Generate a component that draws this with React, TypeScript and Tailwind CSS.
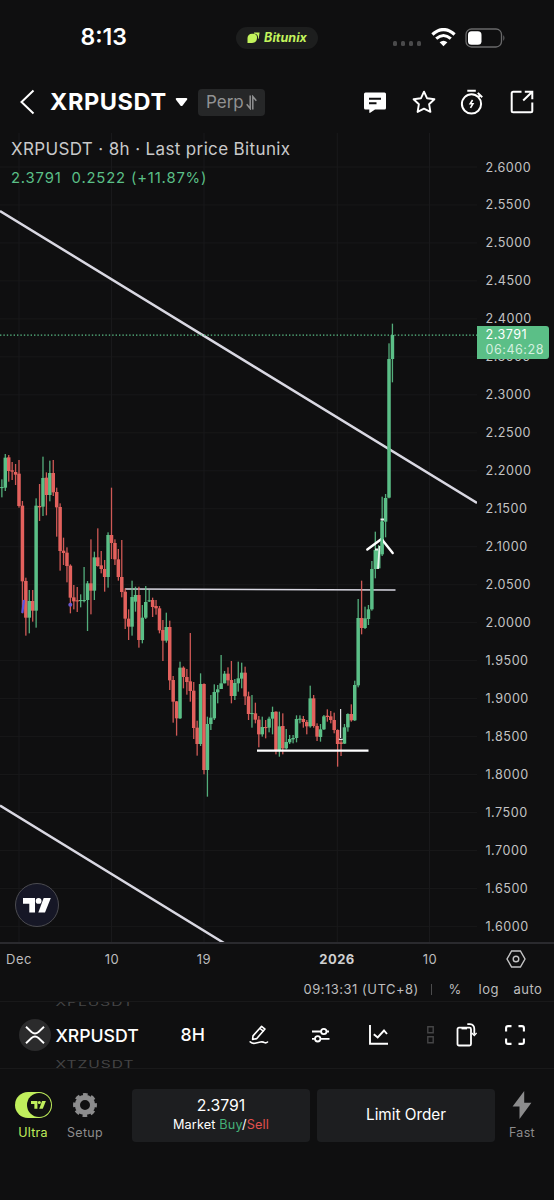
import React from "react";

type Candle = [high: number, low: number, top: number, bottom: number, up: 0 | 1];

// Each segment holds offsets in thirds of a pixel from its base line.
const segments: { base: number; rows: Candle[] }[] = [
  {
    base: 440,
    rows: [
      [118, 172, 141, 143, 1], [42, 153, 53, 143, 1], [45, 125, 52, 93, 0], [66, 120, 91, 95, 0],
      [72, 135, 96, 104, 0], [60, 203, 101, 198, 0], [183, 520, 197, 424, 0], [413, 587, 423, 533, 0],
      [450, 580, 483, 533, 1], [450, 545, 483, 512, 0], [175, 563, 197, 512, 1], [132, 243, 198, 202, 0],
      [50, 228, 114, 200, 1], [97, 226, 113, 165, 0], [62, 184, 99, 165, 1], [60, 168, 99, 157, 0],
      [143, 290, 156, 202, 0], [190, 392, 201, 333, 0], [293, 375, 332, 339, 0], [322, 427, 338, 378, 0],
      [373, 520, 377, 473, 0], [435, 508, 472, 484, 0], [441, 516, 481, 484, 0], [463, 502, 480, 483, 1],
      [381, 487, 480, 482, 1], [423, 573, 430, 480, 1], [298, 523, 430, 452, 0], [335, 480, 352, 452, 1],
      [265, 380, 352, 378, 0], [333, 400, 376, 387, 0], [360, 455, 387, 411, 0], [277, 443, 285, 411, 1],
      [143, 357, 285, 309, 0], [298, 375, 309, 358, 0], [327, 422, 358, 411, 0], [300, 472, 411, 456, 0],
    ],
  },
  {
    base: 470,
    rows: [
      [355, 477, 365, 446, 0], [418, 510, 446, 470, 0], [332, 497, 381, 470, 1], [350, 425, 375, 395, 1],
      [350, 533, 375, 510, 0], [405, 520, 443, 510, 1], [348, 447, 396, 443, 1], [360, 396, 391, 394, 1],
      [383, 441, 390, 411, 0], [390, 434, 408, 415, 0], [408, 490, 415, 481, 0], [450, 573, 480, 512, 0],
      [428, 518, 471, 512, 1], [452, 660, 471, 631, 0], [618, 758, 630, 695, 0], [693, 797, 694, 745, 0],
      [575, 747, 593, 745, 1], [589, 655, 593, 621, 0], [597, 674, 621, 636, 0], [489, 695, 634, 663, 0],
      [636, 807, 662, 774, 0], [752, 857, 773, 822, 0], [610, 828, 642, 822, 1], [640, 913, 642, 900, 0],
      [740, 980, 762, 900, 1], [675, 780, 743, 762, 1],
    ],
  },
  {
    base: 640,
    rows: [
      [133, 240, 156, 235, 1], [135, 190, 148, 157, 1], [45, 147, 130, 147, 1], [93, 130, 101, 130, 1],
      [82, 137, 101, 121, 0], [63, 190, 120, 168, 0], [117, 180, 129, 168, 1], [65, 155, 115, 130, 1],
      [68, 145, 98, 116, 1], [80, 195, 98, 169, 0], [155, 240, 169, 222, 0], [165, 263, 219, 222, 1],
      [188, 250, 220, 239, 0], [228, 322, 239, 283, 0], [230, 290, 261, 283, 1], [240, 295, 261, 264, 0],
      [230, 277, 236, 263, 1], [200, 283, 216, 236, 1], [214, 343, 215, 333, 0], [215, 350, 259, 333, 1],
      [220, 343, 258, 325, 0], [267, 328, 306, 325, 1], [285, 312, 297, 307, 1], [285, 310, 294, 298, 1],
      [226, 307, 237, 294, 1], [226, 250, 236, 239, 1], [228, 263, 237, 246, 0], [240, 283, 246, 259, 0],
      [137, 263, 175, 259, 1], [165, 263, 175, 258, 0], [250, 303, 258, 290, 0], [252, 305, 268, 291, 1],
      [225, 270, 229, 268, 1], [208, 245, 227, 231, 0], [213, 250, 229, 240, 0], [218, 280, 240, 270, 0],
      [268, 380, 270, 312, 0], [300, 348, 307, 312, 0], [252, 312, 262, 311, 1], [220, 275, 222, 262, 1],
      [193, 245, 222, 241, 0], [122, 243, 135, 241, 1],
    ],
  },
  {
    base: 490,
    rows: [
      [327, 592, 384, 586, 1], [272, 433, 384, 414, 0], [350, 417, 385, 414, 1], [345, 405, 358, 387, 1],
      [213, 362, 237, 358, 1], [125, 265, 180, 237, 1], [165, 235, 180, 235, 1], [20, 198, 95, 193, 1],
      [12, 142, 24, 95, 1],
    ],
  },
  { base: 310, rows: [[100, 565, 147, 563, 1], [41, 217, 75, 147, 1]] },
];

const candles = segments.flatMap(({ base, rows }) =>
  rows.map(([h, l, t, b, up]) => ({ h: base + h / 3, l: base + l / 3, t: base + t / 3, b: base + b / 3, up })),
);

const prices = Array.from({ length: 21 }, (_, i) => (2.6 - i * 0.05).toFixed(4));
const gridX = [19, 111.5, 204, 337.3, 429.5];

function Chart() {
  return (
    <svg width="477" height="809" viewBox="0 133 477 809" className="block">
      {prices.map((p, i) => (
        <rect key={p} x="0" y={166.5 + i * 37.97} width="477" height="1" fill="#181819" />
      ))}
      {gridX.map((x) => (
        <rect key={x} x={x - 0.5} y="133" width="1" height="810" fill="#19191b" />
      ))}
      <g stroke="#d9d8e2" fill="none">
        <path d="M0 211L477 503M0 805.5L224 943" strokeWidth="2.5" />
        <path d="M125 589L395.5 590" strokeWidth="1.5" />
      </g>
      {candles.map((c, i) => {
        const x = 1.87 + i * 3.426;
        const color = c.up ? "#5bbf87" : "#e3615d";
        return (
          <g key={i} fill={color}>
            <rect x={x - 0.65} y={c.h} width="1.3" height={c.l - c.h} opacity="0.9" />
            <rect x={x - 1.75} y={c.t} width="3.5" height={Math.max(c.b - c.t, 1.1)} />
          </g>
        );
      })}
      <path d="M22.3 613L24 600" stroke="#5b55e0" strokeWidth="2.2" />
      <circle cx="70.3" cy="604.7" r="2" fill="#6a58cf" />
      <path d="M257 750.6H368.5" stroke="#fff" strokeWidth="2.4" />
      <path d="M340.6 709V738M338.8 739.3H342.8" stroke="#dedee2" strokeWidth="1.2" />
      <path d="M367.3 549.5L381.5 539L392.7 553" stroke="#fff" strokeWidth="2.4" fill="none" strokeLinecap="round" />
      <path d="M378 569L379.6 546M375 549.5H378M380.5 519.5H384" stroke="#e6f3ec" strokeWidth="1.8" fill="none" />
      <path d="M381.8 521V550" stroke="#5bbf87" strokeWidth="2.4" />
      <path d="M0 335.2H477" stroke="#5bbf87" strokeWidth="1.2" strokeDasharray="1.4 2" />
    </svg>
  );
}

function TvMark({ className }: { className: string }) {
  return (
    <svg viewBox="0 0 28 15" className={className} fill="currentColor">
      <path d="M0 0H12V14.5H6.3V5.7H0Z" />
      <circle cx="15.6" cy="2.9" r="2.9" />
      <path d="M20.7 0H27.8L22 14.5H15.3Z" />
    </svg>
  );
}

function StatusBar() {
  return (
    <div className="flex h-[75px] items-center text-white">
      <div className="w-[156px] pl-[80.5px] text-[23px] font-semibold leading-none tracking-[0px]">8:13</div>
      <div className="ml-20 flex h-[22px] w-[82px] items-center justify-center gap-1 rounded-full bg-[#1d1e1e] text-[#c3f45c]">
        <svg width="13" height="12" viewBox="0 0 13 12" fill="currentColor">
          <path d="M.5 11V6Q.8 2 5 1.8H6.3Q10.2 2 10 6 9.7 11 5 11Z" />
          <path d="M7 .6H12.6L11.8 6.3 11 7Q11.6 1.8 7 1.4Z" />
        </svg>
        <span className="text-[12.5px] font-bold italic leading-[14px] tracking-[0.05px]">Bitunix</span>
      </div>
      <div className="ml-[75px] flex items-center">
        <div className="mt-3 flex gap-[3.6px]">
          {[0, 1, 2, 3].map((i) => (
            <span key={i} className="size-[4.4px] rounded-[1.5px] bg-[#4a4a4b]" />
          ))}
        </div>
        <svg width="25" height="19" viewBox="0 0 25 19" className="ml-[9.5px]" fill="none" stroke="#fff">
          <path d="M1.4 6.5Q12.5-3.4 23.6 6.5" strokeWidth="3.2" />
          <path d="M5.2 10.6Q12.5 4.4 19.8 10.6" strokeWidth="3.1" />
          <path d="M12.5 18.3L8.6 14.3Q12.5 11 16.4 14.3Z" fill="#fff" stroke="none" />
        </svg>
        <svg width="41" height="20" viewBox="0 0 41 20" className="ml-[9px]">
          <rect x="1" y="1" width="35.5" height="18" rx="5.5" fill="none" stroke="#69696a" strokeWidth="1.3" />
          <rect x="3" y="3.2" width="13.5" height="13.6" rx="3.6" fill="#fff" />
          <path d="M38.3 7Q40.6 10 38.3 13Z" fill="#69696a" />
        </svg>
      </div>
    </div>
  );
}

function Header() {
  return (
    <div className="flex h-[54px] items-center pl-5 text-white">
      <svg width="15" height="26" viewBox="0 0 15 26" fill="none" stroke="currentColor" strokeWidth="2">
        <path d="M13.5 1.5L1.5 13 13.5 24.5" />
      </svg>
      <h1 className="ml-[15px] w-[118px] whitespace-nowrap text-[23.5px] font-bold leading-none tracking-[0.6px]">XRPUSDT</h1>
      <svg width="13" height="9" viewBox="0 0 13 9" className="ml-[7px]" fill="currentColor">
        <path d="M1.5 0H11.5Q13 .4 12 1.8L7.6 7.4Q6.5 8.6 5.4 7.4L1 1.8Q0 .4 1.5 0Z" />
      </svg>
      <div className="ml-[10px] flex h-[27px] w-[67px] items-center gap-[2px] rounded-sm bg-[#262728] pl-[8px] text-[#919293]">
        <span className="text-[17px] leading-none tracking-[0px]">Perp</span>
        <svg width="11" height="15" viewBox="0 0 11 15" fill="none" stroke="currentColor" strokeWidth="1.5">
          <path d="M4.2 .5V13.5L.7 9.3M6.8 14.5V1.5L10.3 5.7" />
        </svg>
      </div>
      <svg width="24" height="24" viewBox="0 0 24 24" className="ml-[98px]">
        <path d="M2.5 2.5H21.5Q23 2.5 23 4V18Q23 19.5 21.5 19.5H12L7.2 22.8Q6.3 23.2 6.3 22V19.5H2.5Q1 19.5 1 18V4Q1 2.5 2.5 2.5Z" fill="#fff" />
        <path d="M6 8.8H18M6 13.2H13.5" stroke="#0f0f10" strokeWidth="2" />
      </svg>
      <svg width="24" height="24" viewBox="0 0 24 24" className="ml-[25px]" fill="none" stroke="currentColor" strokeWidth="1.9" strokeLinejoin="round">
        <path d="M12 1.7L15.1 8.3 22.4 9.2 17.1 14.2 18.4 21.9 12 18.6 5.6 21.9 6.9 14.2 1.6 9.2 8.9 8.3Z" />
      </svg>
      <svg width="26" height="26" viewBox="0 0 26 26" className="ml-[23px]" fill="none" stroke="currentColor" strokeWidth="2">
        <circle cx="12.5" cy="14.9" r="9.6" />
        <path d="M8.3 1.7H16.8M18.8 3.9L23.2 8.2M19.3 8L21.5 5.8" />
        <path d="M13.6 11L11.2 14.8H13.9L11.5 18.8" strokeWidth="1.6" />
      </svg>
      <svg width="24" height="24" viewBox="0 0 24 24" className="ml-[25px]" fill="none" stroke="currentColor" strokeWidth="2">
        <path d="M11.5 1.7H3.2Q1.7 1.7 1.7 3.2V20.8Q1.7 22.3 3.2 22.3H20.8Q22.3 22.3 22.3 20.8V12.5M14.8 1.7H22.3V9.2M22 2L13.2 10.5" />
      </svg>
    </div>
  );
}

function PriceAxis() {
  return (
    <div className="relative h-[809px] w-[77px] overflow-hidden pt-[16px] text-[12.6px] tracking-[0.5px] text-[#c3c3c4]">
      {prices.map((p) => (
        <div key={p} className="flex h-[37.97px] items-start pl-[8.5px]">
          <span className="-mt-[0.5px] leading-[38px]">{p}</span>
        </div>
      ))}
      <div className="absolute left-0 top-[193px] flex h-[33px] w-[72px] flex-col justify-center rounded-r-[3px] bg-[#5bbf87] pl-[8.5px] leading-[14.7px] text-white">
        <span>2.3791</span>
        <span className="text-[#d3efdf]">06:46:28</span>
      </div>
    </div>
  );
}

function TimeAxis() {
  return (
    <div className="border-t-2 border-[#2a2a2e] text-[13px] tracking-[0.5px] text-[#bdbdbe]">
      <div className="flex h-[30px] items-center leading-none">
        <span className="w-[38px] text-center">Dec</span>
        <span className="ml-[54px] w-[40px] text-center">10</span>
        <span className="ml-[52px] w-[40px] text-center">19</span>
        <span className="ml-[83px] w-[60px] text-center font-bold text-[#d0d0d1]">2026</span>
        <span className="ml-[43px] w-[40px] text-center">10</span>
        <svg width="20" height="18" viewBox="0 0 20 18" className="ml-[56px]" fill="none" stroke="#c4c4c5" strokeWidth="1.4">
          <path d="M5.6 1H14.4L19 9 14.4 17H5.6L1 9Z" />
          <circle cx="10" cy="9" r="2.8" />
        </svg>
      </div>
      <div className="flex h-[27px] items-center pl-[303.5px] pt-[3px] leading-none">
        <span className="w-[127px] whitespace-nowrap">09:13:31 (UTC+8)</span>
        <span className="h-[11px] w-px bg-[#4c4c4d]" />
        <span className="ml-[17px] w-[30px]">%</span>
        <span className="w-[35px]">log</span>
        <span>auto</span>
      </div>
    </div>
  );
}

function Toolbar() {
  return (
    <div className="flex h-[68px] items-center overflow-hidden border-y-[1.5px] border-[#19191a] pl-[18.5px] text-white">
      <div className="flex size-[32px] items-center justify-center rounded-full bg-[#2b2b2c]">
        <svg width="20" height="18" viewBox="0 0 20 18" fill="none" stroke="currentColor" strokeWidth="1.9">
          <path d="M1 .8L6.5 6Q10 9 13.5 6L19 .8M1 17.2L6.5 12Q10 9 13.5 12L19 17.2" />
        </svg>
      </div>
      <div className="ml-[5px] flex w-[125px] flex-col items-start whitespace-nowrap leading-none">
        <span className="-mt-[4px] origin-top scale-y-[0.62] pb-[24px] text-[15.5px] tracking-[1px] text-[#444445]">XPLUSDT</span>
        <span className="-mt-[11px] text-[17.7px] font-medium tracking-[-0.05px]">XRPUSDT</span>
        <span className="-mb-[8px] mt-[16px] origin-top scale-y-[0.62] text-[15.5px] tracking-[1px] text-[#444445]">XTZUSDT</span>
      </div>
      <span className="w-[68.5px] text-[17.7px] font-medium leading-none">8H</span>
      <svg width="20" height="20" viewBox="0 0 20 20" fill="none" stroke="currentColor" strokeWidth="1.6" strokeLinejoin="round" strokeLinecap="round">
        <path d="M12.6 1.3L16 4.1 7.8 13.6 3.6 14.4 4 10.9ZM11 3.5L14.3 6.2" />
        <path d="M1.2 16.8Q3.5 18.8 6 18.2L11.5 17Q14 16.6 15.5 17.6 17 18.4 18.5 17" />
      </svg>
      <svg width="18" height="16" viewBox="0 0 18 16" className="ml-[43px]" fill="none" stroke="currentColor" strokeWidth="1.8">
        <path d="M0 4.5H9M14.5 4.5H17M0 11.8H3M8.5 11.8H17.5" />
        <circle cx="11.8" cy="4.5" r="2.7" />
        <circle cx="5.7" cy="11.8" r="2.7" />
      </svg>
      <svg width="19" height="20" viewBox="0 0 19 20" className="ml-[39px]" fill="none" stroke="currentColor" strokeWidth="1.9">
        <path d="M1 0V18.8H19M4.8 9.2L8.7 12.5 15 5.5 18 9" />
      </svg>
      <svg width="7" height="18" viewBox="0 0 7 18" className="ml-[39px]" fill="none" stroke="#454546" strokeWidth="1.4">
        <path d="M.8 .8H6.2V6.8H.8ZM.8 10.8H6.2V16.8H.8Z" />
      </svg>
      <svg width="21" height="24" viewBox="0 0 21 24" className="ml-[22px]" fill="none" stroke="currentColor" strokeWidth="1.8">
        <rect x="1.5" y="4.7" width="13.5" height="17.8" rx="1.5" />
        <path d="M5.5 5.2H11" strokeWidth="2.4" />
        <path d="M11.3 1.2H14Q18.3 1.6 18.3 6V11.5" />
        <path d="M15.8 10L18.3 12.5 20.6 10" strokeWidth="1.3" />
      </svg>
      <svg width="20" height="20" viewBox="0 0 20 20" className="ml-[28px]" fill="none" stroke="currentColor" strokeWidth="2.1">
        <path d="M1.1 6.5V3Q1.1 1.1 3 1.1H6.5M13.5 1.1H17Q18.9 1.1 18.9 3V6.5M18.9 13.5V17Q18.9 18.9 17 18.9H13.5M6.5 18.9H3Q1.1 18.9 1.1 17V13.5" />
      </svg>
    </div>
  );
}

function OrderBar() {
  return (
    <div className="flex pt-[20px]">
      <div className="flex w-[66px] flex-col items-center pt-[3px] text-[#c0ef5c]">
        <div className="flex h-[26px] w-[37px] items-center justify-end rounded-full bg-current p-px">
          <div className="flex size-[23.5px] items-center justify-center rounded-full bg-[#111211]">
            <TvMark className="w-[15px] text-[#c0ef5c]" />
          </div>
        </div>
        <span className="mt-[7px] text-[12.5px] leading-[15px] tracking-[0.2px]">Ultra</span>
      </div>
      <div className="flex w-[38px] flex-col items-center pt-[3px] text-[#8c8c8d]">
        <svg width="26" height="26" viewBox="0 0 26 26" fill="none" stroke="currentColor">
          <circle cx="13" cy="13" r="7.6" strokeWidth="5.2" />
          <circle cx="13" cy="13" r="10.4" strokeWidth="3.1" strokeDasharray="4.6 3.568" strokeDashoffset="2.3" />
        </svg>
        <span className="mt-[7px] text-[12.5px] leading-[15px] tracking-[0.3px]">Setup</span>
      </div>
      <div className="ml-[28px] flex h-[53px] w-[178px] flex-col items-center justify-center rounded-[4px] bg-[#1d1e20] text-white">
        <span className="text-[15.8px] leading-[18px]">2.3791</span>
        <span className="mt-px text-[12.7px] leading-[18px] tracking-[0.15px]">
          Market <span className="text-[#45b077]">Buy</span>/<span className="text-[#e0504e]">Sell</span>
        </span>
      </div>
      <div className="ml-[7px] flex h-[53px] w-[178px] items-center justify-center rounded-[4px] bg-[#1d1e20] text-[15.3px] text-white">Limit Order</div>
      <div className="ml-[9px] flex w-[36px] flex-col items-center pt-[2px] text-[#8c8c8d]">
        <svg width="20" height="28" viewBox="0 0 20 28" fill="currentColor">
          <path d="M12.2 0L.6 15.5H7.5V28L19.4 11.7H12.2Z" />
        </svg>
        <span className="mt-[6px] text-[12.5px] leading-[15px] tracking-[0.3px]">Fast</span>
      </div>
    </div>
  );
}

export default function App() {
  return (
    <div className="h-[1200px] w-[554px] overflow-hidden bg-[#0f0f10] font-['Inter',sans-serif]">
      <StatusBar />
      <Header />
      <div className="relative mt-[4px] flex">
        <Chart />
        <PriceAxis />
        <div className="absolute left-[11px] top-[6px] whitespace-nowrap">
          <div className="text-[17px] leading-[20px] tracking-[0.36px] text-[#c9c9ca]">XRPUSDT · 8h · Last price Bitunix</div>
          <div className="mt-[9px] text-[14.8px] leading-[20px] tracking-[0.85px] text-[#5bbf87]">2.3791&nbsp; 0.2522 (+11.87%)</div>
        </div>
        <div className="absolute left-[15px] top-[750px] flex size-[44px] items-center justify-center rounded-full border-[1.5px] border-[#4b4b50] bg-[#161726] text-white">
          <TvMark className="w-[28px]" />
        </div>
      </div>
      <TimeAxis />
      <Toolbar />
      <OrderBar />
    </div>
  );
}
